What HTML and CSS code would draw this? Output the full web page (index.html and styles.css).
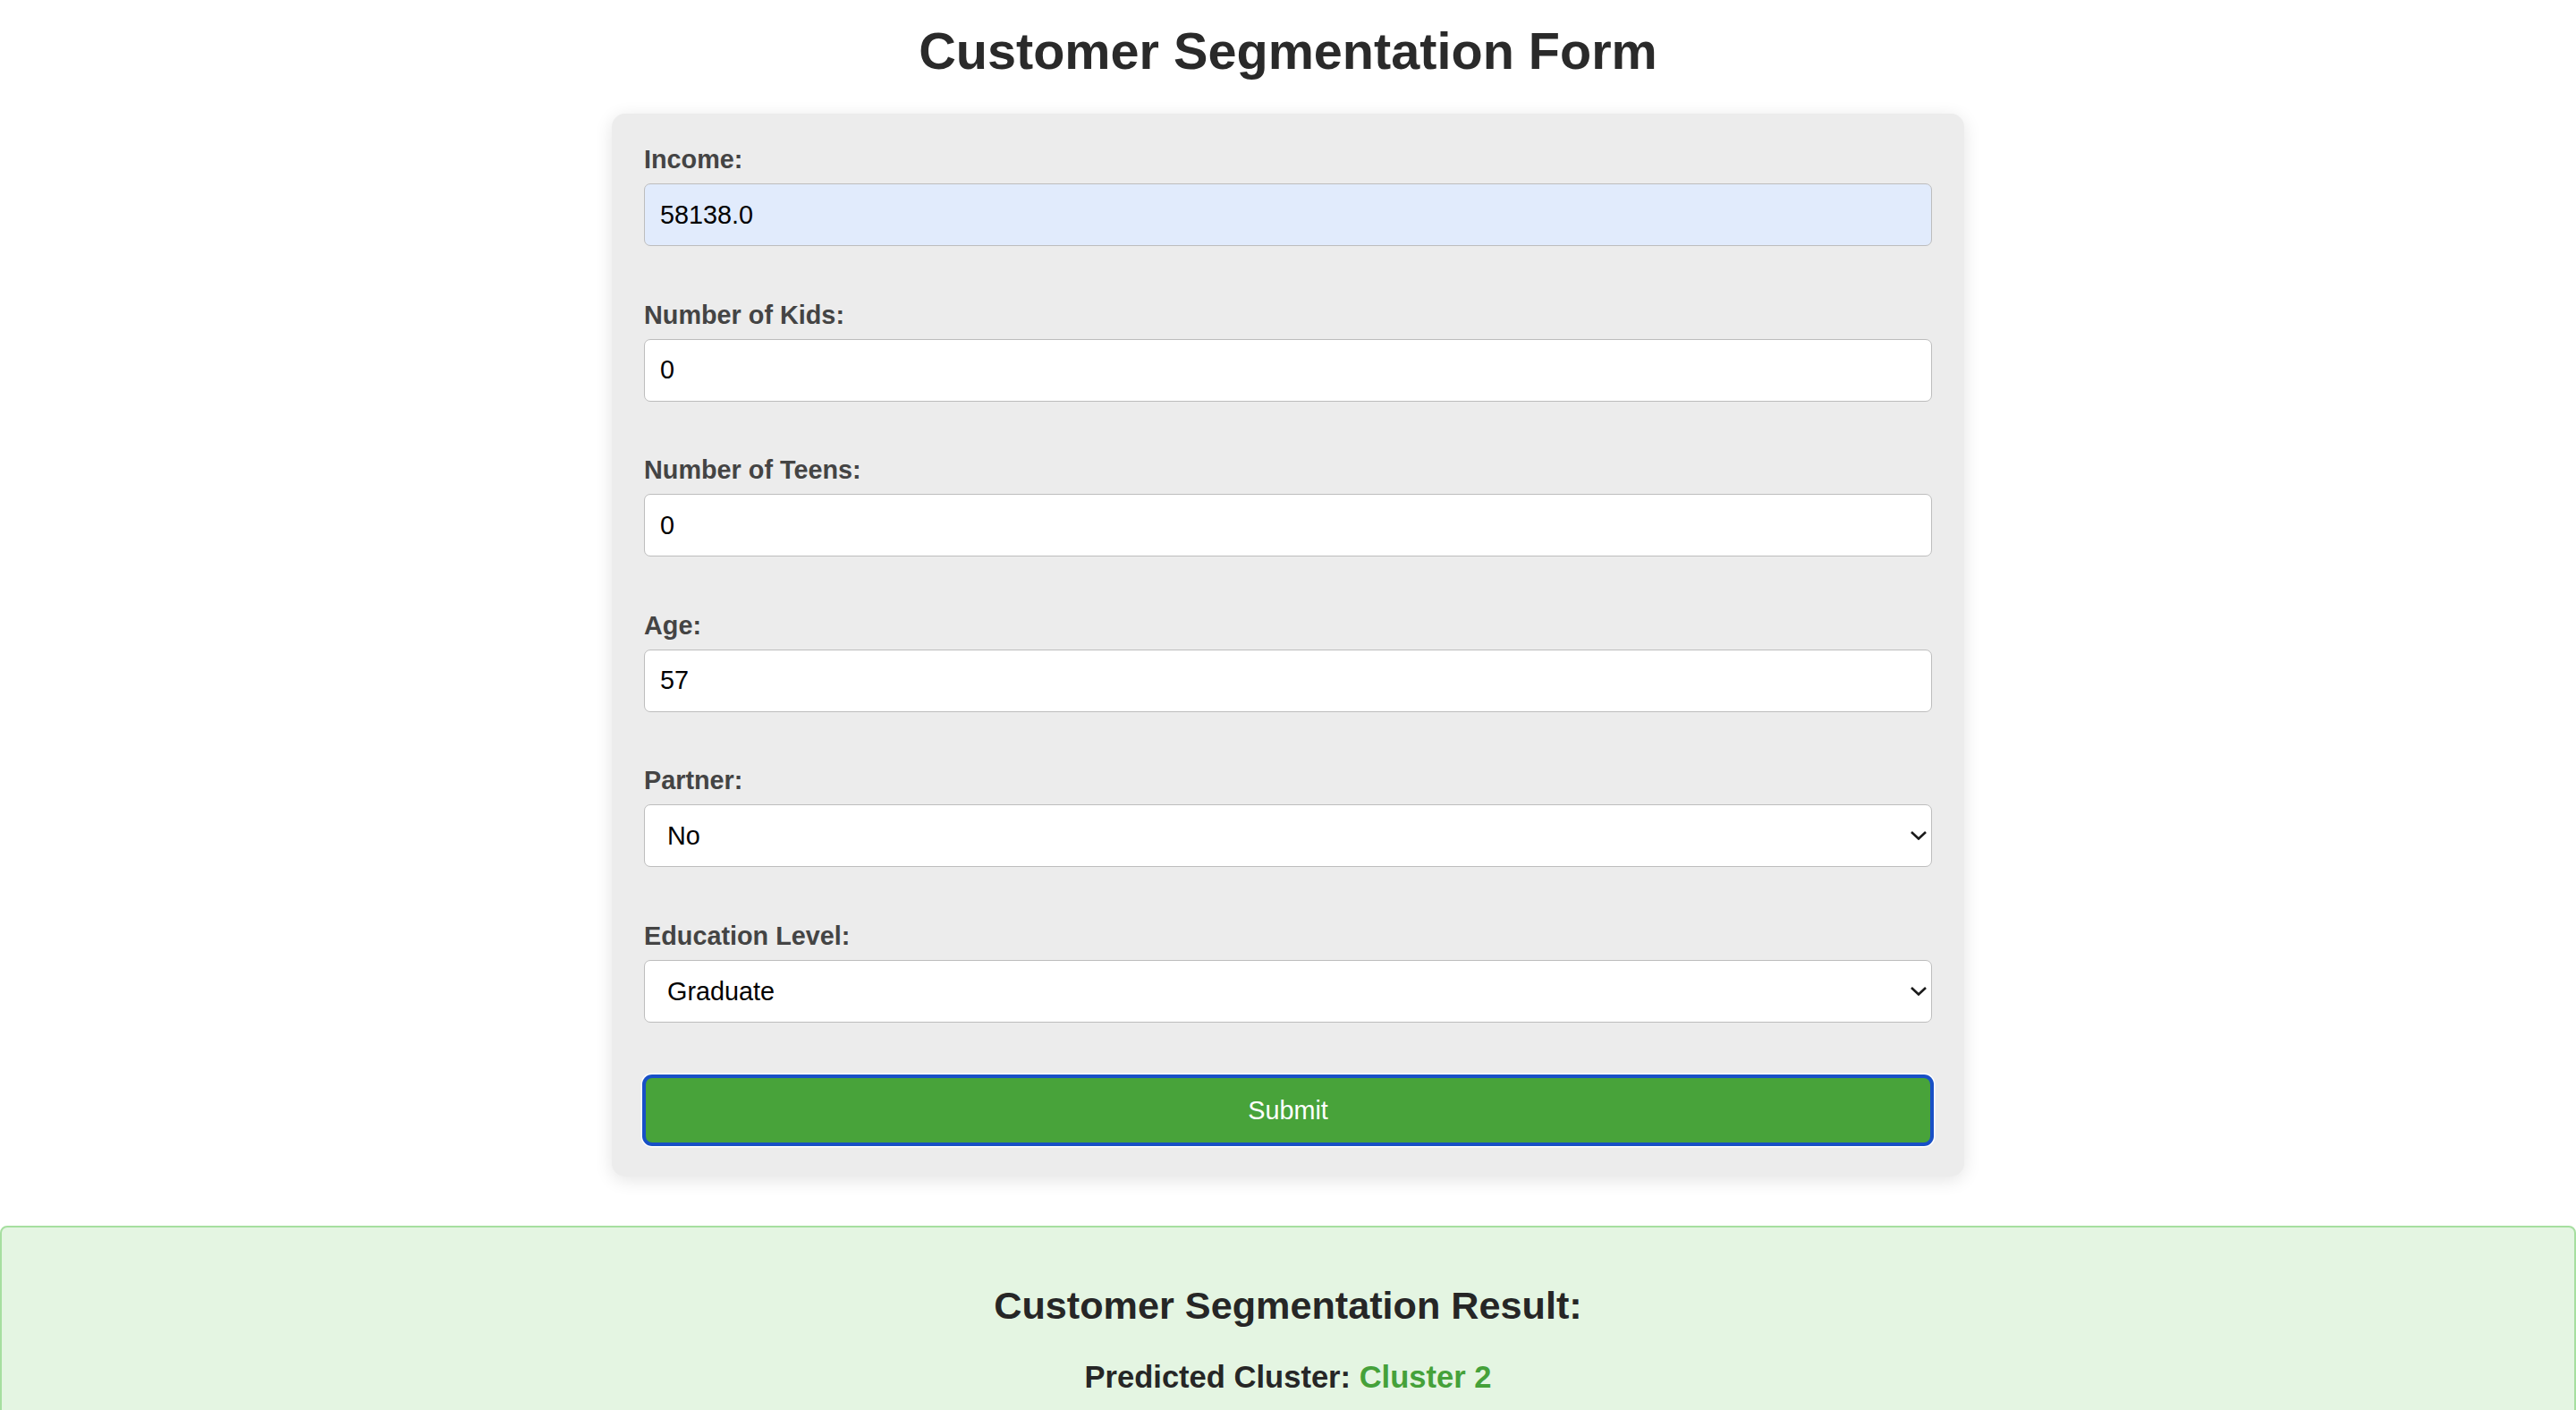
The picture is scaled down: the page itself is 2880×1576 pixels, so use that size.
FILE: index.html
```html
<!DOCTYPE html>
<html lang="en">
<head>
<meta charset="utf-8">
<title>Customer Segmentation Form</title>
<link rel="stylesheet" href="styles.css">
</head>
<body>
<h1 class="title">Customer Segmentation Form</h1>
<form class="card">
  <div class="field">
    <label class="label" for="income">Income:</label>
    <input class="control autofill" id="income" type="text" value="58138.0">
  </div>
  <div class="field">
    <label class="label" for="kids">Number of Kids:</label>
    <input class="control" id="kids" type="text" value="0">
  </div>
  <div class="field">
    <label class="label" for="teens">Number of Teens:</label>
    <input class="control" id="teens" type="text" value="0">
  </div>
  <div class="field">
    <label class="label" for="age">Age:</label>
    <input class="control" id="age" type="text" value="57">
  </div>
  <div class="field">
    <label class="label" for="partner">Partner:</label>
    <div class="select-wrap">
      <select class="control select" id="partner"><option>No</option><option>Yes</option></select>
      <svg class="chevron" viewBox="0 0 18 10" width="18" height="10"><path d="M1 1 L9 8.5 L17 1" fill="none" stroke="#1a1a1a" stroke-width="2.6"/></svg>
    </div>
  </div>
  <div class="field">
    <label class="label" for="edu">Education Level:</label>
    <div class="select-wrap">
      <select class="control select" id="edu"><option>Graduate</option><option>Postgraduate</option><option>Undergraduate</option></select>
      <svg class="chevron" viewBox="0 0 18 10" width="18" height="10"><path d="M1 1 L9 8.5 L17 1" fill="none" stroke="#1a1a1a" stroke-width="2.6"/></svg>
    </div>
  </div>
  <button class="submit" type="button">Submit</button>
</form>
<div class="result">
  <h2 class="result-title">Customer Segmentation Result:</h2>
  <p class="cluster">Predicted Cluster: <span class="cluster-value">Cluster 2</span></p>
</div>
</body>
</html>
```
FILE: styles.css
```css
* { box-sizing: border-box; }

html, body {
  margin: 0;
  padding: 0;
  background: #ffffff;
}

body {
  font-family: "Liberation Sans", Arial, Helvetica, sans-serif;
  font-size: 28.8px;
  color: #333;
}

.title {
  margin: 24px 0 37px;
  font-size: 57.6px;
  font-weight: bold;
  line-height: normal;
  text-align: center;
  color: #2a2a2a;
}

.card {
  width: 1512px;
  margin: 0 auto;
  padding: 35px 36px 36px;
  background: #ececec;
  border-radius: 15px;
  box-shadow: 0 4px 20px rgba(0, 0, 0, 0.11);
  display: flex;
  flex-direction: column;
}

.field {
  display: flex;
  flex-direction: column;
  margin-bottom: 60.5px;
}

.label {
  display: block;
  font-size: 28.8px;
  font-weight: bold;
  line-height: 33px;
  color: #444;
  margin-bottom: 10px;
}

.control {
  display: block;
  width: 100%;
  height: 70px;
  margin: 0;
  padding: 0 17px;
  border: 1.8px solid #bdbdbd;
  border-radius: 7px;
  background: #ffffff;
  font-family: "Liberation Sans", Arial, Helvetica, sans-serif;
  font-size: 28.8px;
  color: #000;
  outline: none;
}

.autofill {
  background: #e1ebfc;
}

.select-wrap {
  position: relative;
}

.select {
  appearance: none;
  -webkit-appearance: none;
  padding-left: 25px;
}

.chevron {
  position: absolute;
  right: 6px;
  top: 30px;
  pointer-events: none;
}

.submit {
  display: block;
  width: 100%;
  height: 76px;
  margin: 0;
  padding: 0;
  border: 2px solid #1850c6;
  border-radius: 9px;
  box-shadow: 0 0 0 2px #1850c6, 0 0 0 3.5px #ffffff;
  background: #48a33a;
  color: #ffffff;
  font-family: "Liberation Sans", Arial, Helvetica, sans-serif;
  font-size: 28.8px;
  font-weight: normal;
  cursor: pointer;
}

.result {
  margin-top: 55px;
  padding: 25px 36px 40px;
  background: #e4f5e2;
  border: 2px solid #a6dfa0;
  border-radius: 8px;
  text-align: center;
  min-height: 300px;
}

.result-title {
  margin: 38px 0 36px;
  font-size: 43.2px;
  font-weight: bold;
  line-height: normal;
  color: #262626;
}

.cluster {
  margin: 0;
  font-size: 34.56px;
  font-weight: bold;
  line-height: normal;
  color: #262626;
}

.cluster-value {
  color: #45a13a;
}
```
